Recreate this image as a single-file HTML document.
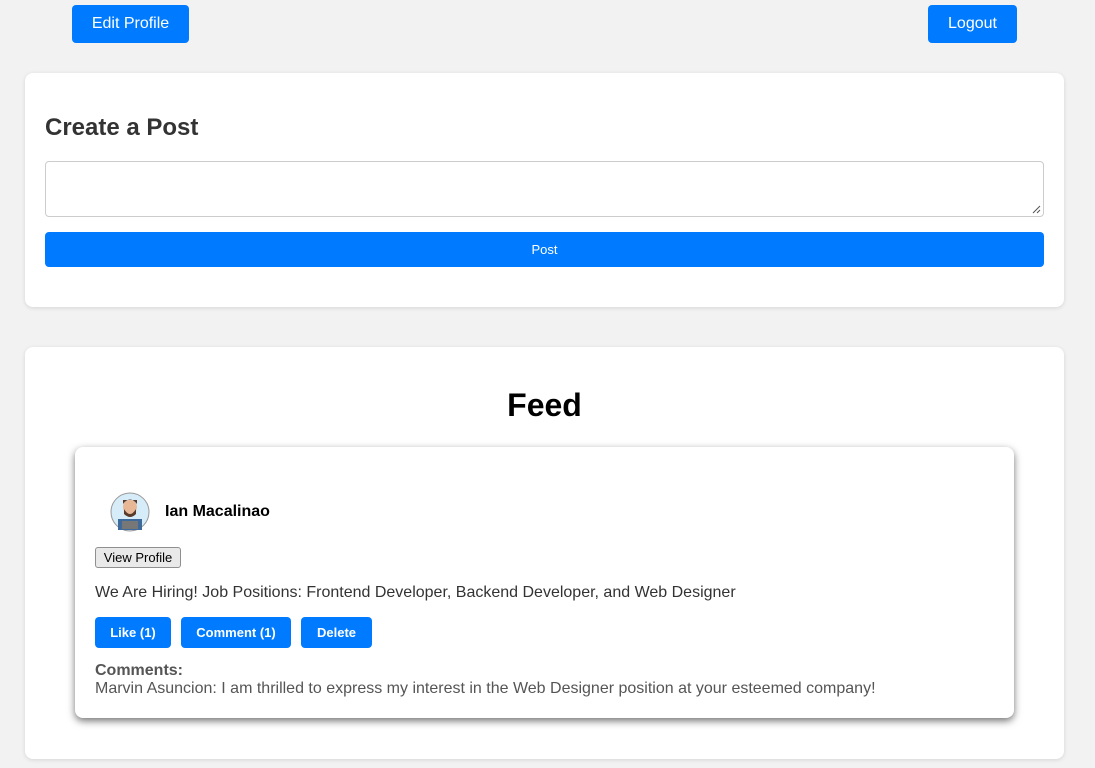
<!DOCTYPE html>
<html><head><style>
*{box-sizing:border-box;margin:0;padding:0}
body{width:1095px;height:768px;background:#f2f2f2;font-family:"Liberation Sans",Arial,sans-serif;position:relative;overflow:hidden}
.btn{position:absolute;background:#007bff;color:#fff;border-radius:4px;display:flex;align-items:center;justify-content:center}
.card{position:absolute;background:#fff;border-radius:8px;box-shadow:0 1px 4px rgba(0,0,0,.12)}
</style></head><body>
<div class="btn" style="left:72px;top:5px;width:117px;height:38px;font-size:16px">Edit Profile</div>
<div class="btn" style="left:928px;top:5px;width:89px;height:38px;font-size:16px">Logout</div>
<div class="card" style="left:25px;top:73px;width:1039px;height:234px">
<div style="position:absolute;left:20px;top:41px;font-size:24px;font-weight:bold;color:#333">Create a Post</div>
<div style="position:absolute;left:20px;top:88px;width:999px;height:56px;border:1px solid #ccc;border-radius:4px">
<svg style="position:absolute;right:2px;bottom:2px" width="10" height="10"><path d="M9 2L2 9M9 6L6 9" stroke="#555" stroke-width="1"/></svg></div>
<div class="btn" style="left:20px;top:159px;width:999px;height:35px;font-size:13px">Post</div>
</div>
<div class="card" style="left:25px;top:347px;width:1039px;height:412px">
<div style="position:absolute;left:0;width:100%;top:40px;text-align:center;font-size:32px;font-weight:bold">Feed</div>
<div style="position:absolute;left:50px;top:100px;width:939px;height:271px;background:#fff;border-radius:8px;box-shadow:0 3px 8px rgba(0,0,0,.55)">
<svg style="position:absolute;left:34px;top:44px" width="42" height="42" viewBox="0 0 42 42"><circle cx="21" cy="21" r="19" fill="#d6ecf8" stroke="#999"/><rect x="9" y="28" width="24" height="11" fill="#3d6a9a"/><circle cx="21" cy="16" r="7" fill="#e8b896"/><path d="M14 13 q7-9 14 0 v-4 h-14z" fill="#5a3b2a"/><path d="M15 18 q6 10 12 0 v5 q-6 6 -12 0z" fill="#5a3b2a"/><rect x="13" y="30" width="16" height="8" fill="#777"/></svg>
<div style="position:absolute;left:90px;top:56px;font-size:16px;font-weight:bold">Ian Macalinao</div>
<div style="position:absolute;left:20px;top:100px;width:86px;height:21px;background:#e9e9e9;border:1px solid #8f8f8f;border-radius:3px;font-size:13px;display:flex;align-items:center;justify-content:center">View Profile</div>
<div style="position:absolute;left:20px;top:137px;font-size:16px;color:#333">We Are Hiring! Job Positions: Frontend Developer, Backend Developer, and Web Designer</div>
<div class="btn" style="left:20px;top:170px;width:76px;height:31px;font-size:13px;font-weight:bold">Like (1)</div>
<div class="btn" style="left:106px;top:170px;width:110px;height:31px;font-size:13px;font-weight:bold">Comment (1)</div>
<div class="btn" style="left:226px;top:170px;width:71px;height:31px;font-size:13px;font-weight:bold">Delete</div>
<div style="position:absolute;left:20px;top:215px;font-size:16px;color:#555;line-height:18px"><b>Comments:</b><br>Marvin Asuncion: I am thrilled to express my interest in the Web Designer position at your esteemed company!</div>
</div>
</div>
</body></html>
